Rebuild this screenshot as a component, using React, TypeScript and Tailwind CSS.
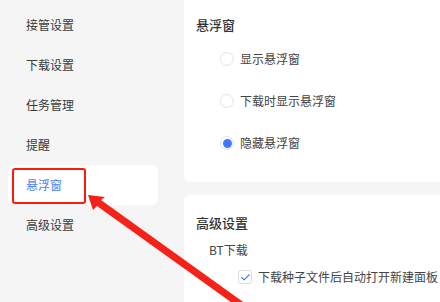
import { Check } from "lucide-react";

const menuItems = ["接管设置", "下载设置", "任务管理", "提醒", "悬浮窗", "高级设置"];

const floatOptions = [
  { label: "显示悬浮窗", checked: false },
  { label: "下载时显示悬浮窗", checked: false },
  { label: "隐藏悬浮窗", checked: true },
];

const font = { fontFamily: '"Noto Sans CJK SC", "Noto Sans", sans-serif' };

function Radio({ checked }: { checked: boolean }) {
  return (
    <span className="flex h-[14px] w-[14px] items-center justify-center rounded-full border border-[#e3e3e3] bg-white">
      {checked && <span className="h-[9px] w-[9px] rounded-full bg-[#3b7cff]" />}
    </span>
  );
}

export default function App() {
  return (
    <div
      className="relative flex h-[302px] w-[440px] overflow-hidden bg-[#f5f5f5] text-[#333]"
      style={font}
    >
      {/* sidebar */}
      <div className="w-[184px] shrink-0 pt-[5px]">
        {menuItems.map((item) => {
          const active = item === "悬浮窗";
          return (
            <div
              key={item}
              className={
                active
                  ? "mx-2 flex h-10 w-[150px] items-center rounded-md bg-white pl-[18px] text-[12px] text-[#4d82fb]"
                  : "flex h-10 items-center pl-[26px] text-[12px] text-[#3a3a3a]"
              }
            >
              {item}
            </div>
          );
        })}
      </div>

      {/* content */}
      <div className="flex flex-1 flex-col gap-[13px]">
        <div className="h-[182px] shrink-0 rounded-bl-md bg-white pl-3 pt-4">
          <div className="text-[13px] font-medium leading-[18px] text-[#333]">悬浮窗</div>
          <div className="mt-1">
            {floatOptions.map((opt) => (
              <div key={opt.label} className="flex h-[42px] items-center gap-[6px] pl-6 text-[12px] text-[#444]">
                <Radio checked={opt.checked} />
                <span>{opt.label}</span>
              </div>
            ))}
          </div>
        </div>

        <div className="flex-1 rounded-tl-md bg-white pl-3 pt-[19px]">
          <div className="text-[13px] font-medium leading-[18px] text-[#333]">高级设置</div>
          <div className="mt-[9px] flex h-[18px] items-center pl-[13px] text-[12px] text-[#444]">BT下载</div>
          <div className="mt-[9px] flex h-[18px] items-center gap-[6px] whitespace-nowrap pl-[42px] text-[12px] text-[#444]">
            <span className="flex h-[14px] w-[14px] shrink-0 items-center justify-center rounded-[3px] border border-[#dcdcdc] bg-white">
              <Check size={11} strokeWidth={2.5} className="text-[#3b7cff]" />
            </span>
            <span>下载种子文件后自动打开新建面板</span>
          </div>
        </div>
      </div>

      {/* annotation: red box */}
      <div className="absolute left-[12px] top-[168px] h-[36px] w-[74px] rounded-[3px] border-2 border-[#ff1a0d]" />

      {/* annotation: arrow */}
      <svg className="pointer-events-none absolute left-0 top-0" width="440" height="302" viewBox="0 0 440 302">
        <polygon points="88,195 105,197 101,200 246,304 242,310 97,206 93,210" fill="#f5221a" />
      </svg>
    </div>
  );
}
